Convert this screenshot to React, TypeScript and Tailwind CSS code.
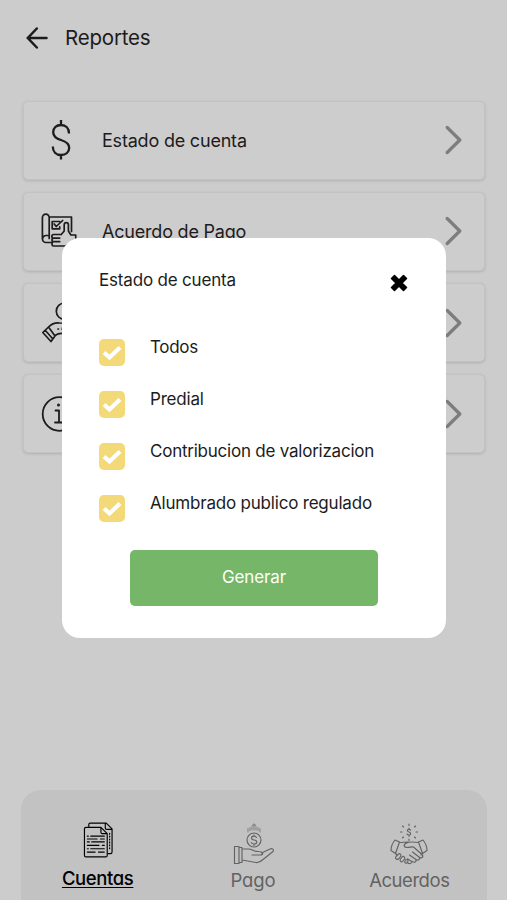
import React from "react";

type IconProps = { className?: string };

const line = {
  fill: "none",
  stroke: "currentColor",
  strokeLinecap: "round" as const,
  strokeLinejoin: "round" as const,
};

function BackArrow() {
  return (
    <svg {...line} width="22" height="22" viewBox="0 0 22 22" strokeWidth="2.5" className="block">
      <path d="M20.500 11H2M10.800 1.500 1.800 11l9 9.500" strokeLinejoin="miter" />
    </svg>
  );
}

function DollarIcon() {
  return (
    <svg {...line} width="38" height="42" viewBox="-1 0 38 42" strokeWidth="2.3">
      <path
        d="M18 1v4.500M18 36v4.500M26 14.500c0-5-3.200-8.500-8-8.500s-7.800 3-7.800 7.200c0 4.300 2.800 6.200 7.800 7.800s8.200 3.400 8.200 7.800c0 4.200-3.200 7.200-8.200 7.200s-8.200-3.500-8.200-8.500"
        strokeLinecap="butt"
      />
    </svg>
  );
}

function AgreementIcon() {
  return (
    <svg {...line} width="36" height="36" viewBox="0.3 0 36 36" strokeWidth="1.7" overflow="visible">
      <path d="M7.500 22.500V4.500a3.400 3.400 0 0 0-6.800 0V26M7.500 4h22.300v14.500M7.500 22.500H4.300a3.500 3.500 0 0 0 0 7H10M7.500 22.500v3" />
      <path d="M18 8.500h-7.500v7.300H18v-2M12.500 11l2 2.500L21 7.500" />
      <path d="M19.500 21.500h-7.700c-2.200 0-2.200 3.600 0 3.600H18M11.800 25.100c-2 0-2 3.600 0 3.600H18M11.800 28.700c-2 0-2 4.300 0 4.300H24l8-6M19.500 21.500l3-3.500V11.800c0-2.800 4.200-2.800 4.200 0v6.200l2.500 4H34v5" />
    </svg>
  );
}

function DonationIcon() {
  return (
    <svg {...line} width="44" height="42" viewBox="0 0 44 42" strokeWidth="1.7">
      <circle cx="22.500" cy="9.200" r="8.200" />
      <path d="M.8 30.500 6.500 25l6.500 9-4 5.500zM3.200 28.300l7.500 8.500M6.500 25c3.500-3.500 7-4.500 11-4l12 .5c3 0 3 4 0 4h-9M13 33.500c3-2 5-2.500 8-2l12-5" />
      <path d="M16 27h.5M20 27h1" />
    </svg>
  );
}

function InfoIcon() {
  return (
    <svg {...line} width="36" height="36" viewBox="0.500 0 36 36" strokeWidth="1.8" overflow="visible">
      <circle cx="18" cy="18" r="16.800" />
      <path d="M14 14.500h3.500v12M13.500 26.500h8" />
      <circle cx="17" cy="9" r="1.500" fill="currentColor" stroke="none" />
    </svg>
  );
}

function Chevron() {
  return (
    <svg {...line} width="18" height="30" viewBox="0 0 18 30" strokeWidth="3.200" className="text-[#7d7d7d]">
      <path d="M3.200 2.500 15.800 15 3.200 27.500" />
    </svg>
  );
}

function CloseIcon() {
  return (
    <svg {...line} width="18" height="18" viewBox="0 0 18 18" strokeWidth="1.500" className="block" fill="currentColor">
      <path d="M4.500 1.500 9 6l4.500-4.500 3 3L12 9l4.500 4.500-3 3L9 12l-4.500 4.500-3-3L6 9 1.500 4.500z" />
    </svg>
  );
}

function CheckMark() {
  return (
    <svg {...line} width="20" height="18" viewBox="0 0 20 18" strokeWidth="4.200">
      <path d="m2 8.500 5.500 5L18 3.500" strokeLinecap="butt" strokeLinejoin="miter" />
    </svg>
  );
}

function DocumentsIcon() {
  return (
    <svg {...line} width="31" height="38" viewBox="0 0 32 38" strokeWidth="1.200">
      <path d="M6 5V3c0-1 .5-1.500 1.500-1.500H24l6 6V31c0 1-.5 2-1.500 2H26M23 1.500v5c0 1 .6 1.500 1.500 1.500H30" />
      <path d="M3 6h15.500l6.500 6.500V35c0 1-.5 1.500-1.500 1.500H3c-1 0-1.500-.5-1.500-1.500V7.500C1.500 6.500 2 6 3 6zM18.500 6v5c0 1 .5 1.500 1.500 1.500h5" />
      <path d="M4.500 15h1M8 15h14M4.500 18h10M18 18h4M4.500 21h2M9 21h13M4.500 24.500h12M20 24.500h2M4.500 28h1M8 28h14M4.500 31.500h8M16 31.500h6" />
      <path d="M27.500 12v1M27.500 15v1M27.500 18v1M27.500 21v1M27.500 24v1M27.500 27v1" />
    </svg>
  );
}

function PaymentIcon({ className }: IconProps) {
  return (
    <svg {...line} width="42" height="42" viewBox="0 0 42 42" strokeWidth="1.150" className={className}>
      <circle cx="21" cy="17" r="7" />
      <path d="M23.500 14.500c-.6-1-1.400-1.400-2.500-1.400-3.200 0-3.200 3.500 0 3.900 3.700.4 3.500 4 0 4-1.300 0-2.200-.5-2.700-1.500M21 11.800v1.300M21 21v1.400" />
      <path d="M15 9V5.500M17 7.500V4.500M19 7V3.500M21 7V1M23 7V3.500M25 7.500V4.500M27 9V5.500M19.500 2.500 21 1l1.500 1.500" opacity=".6" />
      <path d="M1.500 23.500H6v17H1.500zM6 24.500h3v15H6M9 26h6.500c4 0 4 2.500 9.500 2.500s6 3.500 2 3.500h-8M9 37l14 2.500c3 .4 5-1 7-3l10-8c1.500-2-1-3.500-3-2.500l-8.500 4" />
    </svg>
  );
}

function HandshakeIcon({ className }: IconProps) {
  return (
    <svg {...line} width="40" height="42" viewBox="0 0 40 42" strokeWidth="1.150" className={className}>
      <path d="M20 1v1.500M13.500 3l1 1M26.500 3l-1 1M11.500 9h1.500M27 9h1.500M13.500 15l1-1M26.500 15l-1-1M20 16v1.500" />
      <path d="M21.700 7.200c-.4-.6-.9-.9-1.700-.9-2.200 0-2 2.300 0 2.700s2.200 3 0 3c-.9 0-1.500-.3-1.900-.9M20 5v1.300M20 12v1.200" />
      <path d="m6 17 4.500 2-4 11.500L2 27.500c0-4 1.500-7.500 4-10.500zM34 17l-4.500 2 4 11.500 4.500-3c0-4-1.500-7.500-4-10.500zM10.500 19.500c3.500 0 5-.5 8.500-.5M29.500 19.500c-4-.5-9-1-12 .5-4 2-2.500 4.500 1 4.500 2.500 0 4-1 6-.5l8.500 7.500c2 2 0 4.500-3 2.500L23.500 29M30 34c1.500 2-.5 4-3 2.500L20.500 32M27 36.500c.5 2.500-1.500 3.500-4 2L18.500 36M23 38.500c-.5 2.500-3.500 3-5 .5M6.500 30.500 8 32M33.500 30.500 32 32" />
      <path d="M9.500 31 7 33.500c-1.500 2 1 4 3 2l1.500-2c1.200-1.600-.5-3.500-2-2.500zM13 34l-1.500 2c-1.300 2 1 4 2.500 2l1.500-2c1-1.600-1-3.500-2.500-2zM17 36.500l-1 1.500c-1 2 1.300 3 2.500 1.500 1.200-1.600 0-4-1.500-3z" />
    </svg>
  );
}

const reports = [
  { label: "Estado de cuenta", icon: <DollarIcon /> },
  { label: "Acuerdo de Pago", icon: <AgreementIcon /> },
  { label: "", icon: <DonationIcon /> },
  { label: "", icon: <InfoIcon /> },
];

const options = [
  { label: "Todos", tracking: "tracking-[-0.3px]" },
  { label: "Predial", tracking: "tracking-[-0.2px]" },
  { label: "Contribucion de valorizacion", tracking: "tracking-[-0.23px]" },
  { label: "Alumbrado publico regulado", tracking: "tracking-[-0.2px]" },
];

function ReportsModal() {
  return (
    <section className="absolute left-[62px] top-[238px] h-[400px] w-[384px] rounded-[18px] bg-white px-[37px] pt-[30px] text-[#1c1c1c]">
      <header className="flex h-[26px] items-start justify-between">
        <h2 className="text-[17px] leading-[25px] tracking-[-0.18px]">Estado de cuenta</h2>
        <button aria-label="Cerrar" className="mr-px mt-[6px] text-black">
          <CloseIcon />
        </button>
      </header>
      <ul className="mt-[45px] flex flex-col gap-[25px]">
        {options.map((option) => (
          <li key={option.label} className="flex h-[27px] items-start">
            <span className="flex h-[27px] w-[26px] items-center justify-center rounded-[5px] bg-[#f3d978] text-white">
              <CheckMark />
            </span>
            <span className={`-mt-1 ml-[25px] whitespace-nowrap text-[17px] leading-[25px] ${option.tracking}`}>
              {option.label}
            </span>
          </li>
        ))}
      </ul>
      <button className="ml-[31px] mt-[28px] block h-[56px] w-[248px] rounded-[5px] bg-[#76b668] text-[17px] tracking-[-0.15px] text-white">
        Generar
      </button>
    </section>
  );
}

export default function App() {
  return (
    <div className="relative flex h-[900px] w-[507px] flex-col overflow-hidden bg-[#cccccc] font-['Inter','Liberation_Sans',sans-serif] text-[#1d1b1c]">
      <header className="flex h-[76px] items-center gap-[17px] pl-[26px]">
        <BackArrow />
        <h1 className="text-[20.5px] leading-6 tracking-[-0.2px]">Reportes</h1>
      </header>
      <main className="mt-[24.500px] flex flex-1 flex-col gap-[12.300px] pl-[23px]">
        {reports.map((report, index) => (
          <div
            key={index}
            className="flex h-[79px] w-[462px] shrink-0 items-center rounded-[5px] border border-[#c3c3c3] bg-[#cdcdcd] pr-[22px] shadow-[0_1px_3px_rgba(0,0,0,0.14)]"
          >
            <div className="flex w-[78px] shrink-0 items-center pl-[18px]">{report.icon}</div>
            <span className="flex-1 whitespace-nowrap text-[18px] tracking-[-0.2px]">{report.label}</span>
            <Chevron />
          </div>
        ))}
      </main>
      <nav className="ml-[21px] flex h-[110px] w-[466px] rounded-t-[20px] bg-[#c2c2c2] text-[18.5px] text-[#636363] [font-feature-settings:'cv11']">
        <a className="flex flex-1 flex-col items-center pt-[31px] font-medium text-black">
          <DocumentsIcon />
          <span className="mr-[2px] mt-[7px] leading-6 tracking-[-0.4px] underline underline-offset-2">Cuentas</span>
        </a>
        <a className="flex flex-1 flex-col items-center pt-[33px]">
          <PaymentIcon />
          <span className="mr-[2px] mt-[3px] leading-6 tracking-[-0.15px]">Pago</span>
        </a>
        <a className="flex flex-1 flex-col items-center pt-[33px]">
          <HandshakeIcon />
          <span className="mt-[3px] leading-6 tracking-[-0.45px]">Acuerdos</span>
        </a>
      </nav>
      <ReportsModal />
    </div>
  );
}
